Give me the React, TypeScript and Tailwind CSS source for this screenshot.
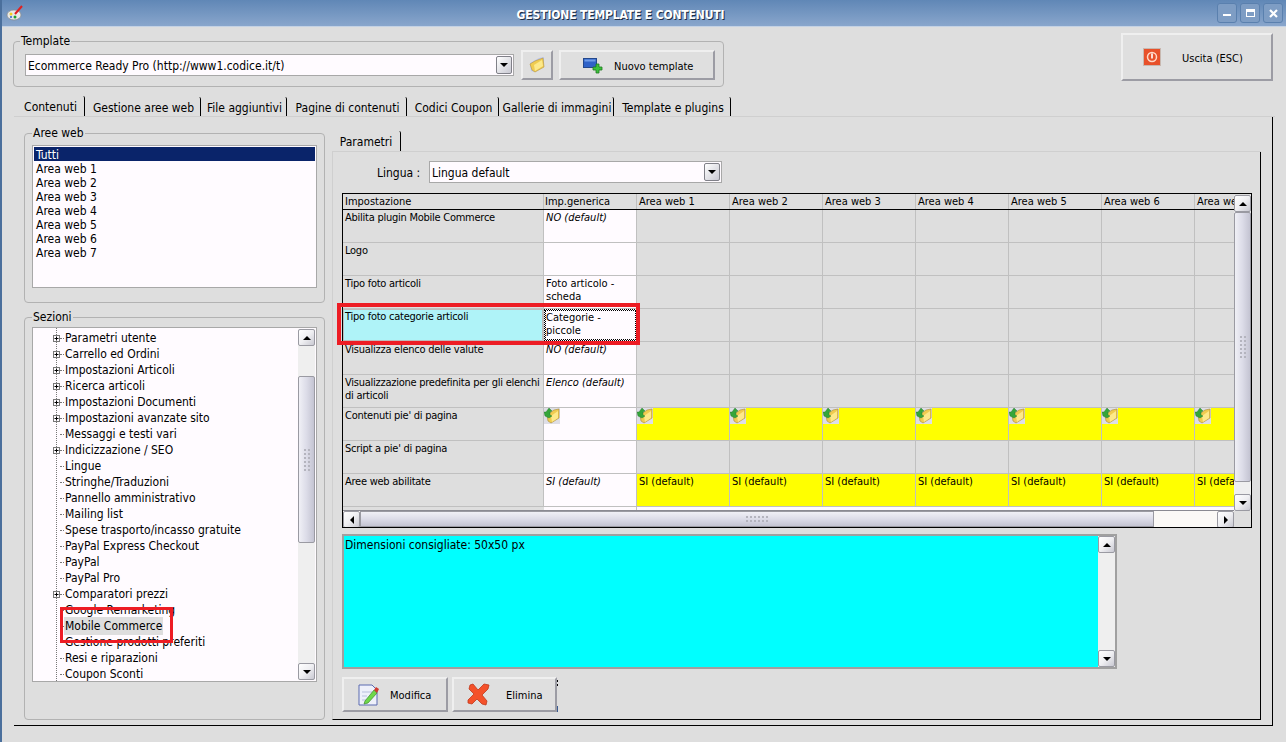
import React from "react";

const Tri = ({ d }: { d: "u" | "d" | "l" | "r" }) => {
  const p = { u: "1,7 9,7 5,3", d: "1,3 9,3 5,7", l: "7,1 7,9 3,5", r: "3,1 3,9 7,5" }[d];
  return (
    <svg width="10" height="10" viewBox="0 0 10 10">
      <polygon points={p} fill="#000" />
    </svg>
  );
};

const SBtn = ({ d }: { d: "u" | "d" | "l" | "r" }) => (
  <div className="w-[17px] h-[17px] shrink-0 flex items-center justify-center rounded-[2px] border border-[#9a9aa2] bg-gradient-to-br from-[#ffffff] via-[#efeff2] to-[#c9c9d2]">
    <Tri d={d} />
  </div>
);

const Grip = ({ cols, rows }: { cols: number; rows: number }) => (
  <div className="grid gap-[2px]" style={{ gridTemplateColumns: `repeat(${cols}, 2px)` }}>
    {Array.from({ length: cols * rows }).map((_, i) => (
      <div key={i} className="w-[2px] h-[2px] bg-[#b4b4be]" />
    ))}
  </div>
);

const VScroll = ({ before, thumb }: { before: number; thumb: number }) => (
  <div className="w-[17px] shrink-0 h-full flex flex-col bg-[#efefef]">
    <SBtn d="u" />
    <div className="shrink-0" style={{ height: before }} />
    {thumb > 0 && (
      <div
        className="shrink-0 flex items-center justify-center border border-[#9a9aa2] rounded-[2px] bg-gradient-to-r from-[#f0f0f6] via-[#dcdce8] to-[#c4c4d2]"
        style={{ height: thumb }}
      >
        <Grip cols={2} rows={6} />
      </div>
    )}
    <div className="flex-1" />
    <SBtn d="d" />
  </div>
);

const Group = ({ title, className, legend, children }: { title: string; className: string; legend: string; children: React.ReactNode }) => (
  <fieldset className={`border border-[#b2b2b2] rounded-[4px] ${className}`}>
    <legend className={`${legend} px-[1px] h-[14px] leading-[14px] whitespace-nowrap`}>{title}</legend>
    {children}
  </fieldset>
);

const Palette = () => (
  <svg width="18" height="16" viewBox="0 0 18 16">
    <ellipse cx="8" cy="10" rx="7" ry="5" fill="#e8e8e8" stroke="#8a8a8a" strokeWidth="0.7" />
    <circle cx="5" cy="9" r="1.5" fill="#f2d020" />
    <circle cx="9" cy="12" r="1.5" fill="#20a030" />
    <circle cx="5" cy="12" r="1" fill="#3060d0" />
    <path d="M9 9 L16 1" stroke="#e02020" strokeWidth="2" />
  </svg>
);

const Folder = () => (
  <svg width="16" height="16" viewBox="0 0 16 16">
    <path d="M1 6 L10 1 L15 0 L15 9 L6 15 L2 14 Z" fill="#b8c4ee" />
    <path d="M1 7 L6 4 L14 1 L15 10 L6 15 L3 13 Z" fill="#f0cc50" stroke="#b8963a" strokeWidth="0.6" />
    <path d="M5 8 L13 3 L14 9 L6 14 Z" fill="#fde98a" />
  </svg>
);

const FolderGreen = () => (
  <svg width="16" height="16" viewBox="0 0 16 16">
    <rect width="16" height="16" fill="#dedee6" />
    <path d="M3 7 L10 2 L15 1 L15 10 L7 15 L4 13 Z" fill="#f0cc50" stroke="#a88a38" strokeWidth="0.6" />
    <path d="M7 8 L14 3 L14 10 L8 14 Z" fill="#fde98a" />
    <path d="M5 0 L8 3 L6 4 L6 7 L8 8 L5 10 L1 8 L0 4 L2 4 Z" fill="#35a53a" stroke="#1d7426" strokeWidth="0.4" />
  </svg>
);

const NewTemplate = () => (
  <svg width="20" height="17" viewBox="0 0 20 17">
    <rect x="0.5" y="1.5" width="13" height="9" fill="#2f62c8" stroke="#24488c" />
    <rect x="1.5" y="2.5" width="11" height="2" fill="#6f9be8" />
    <path d="M11 8 h3 v-3 h3 v3 h3 v3 h-3 v3 h-3 v-3 h-3 z" transform="translate(-1 2)" fill="#3cc23c" stroke="#1e7a1e" strokeWidth="0.8" />
  </svg>
);

const Power = () => (
  <svg width="18" height="18" viewBox="0 0 18 18">
    <rect x="0.5" y="0.5" width="17" height="17" fill="#e8512a" stroke="#c8b8b0" />
    <circle cx="9" cy="9" r="4.5" fill="none" stroke="#ffd8c8" strokeWidth="1.5" />
    <rect x="8.2" y="5.5" width="1.6" height="5" fill="#fff" />
  </svg>
);

const EditIcon = () => (
  <svg width="22" height="22" viewBox="0 0 22 22">
    <path d="M1 1 H14 L19 6 V21 H1 Z" fill="#eef0fa" stroke="#5a6ab0" />
    <path d="M4 8 H14 M4 12 H9 M4 16 H8" stroke="#b8c0dc" />
    <path d="M7 17 L16 6 L19 9 L10 19 L6 20 Z" fill="#6fd84a" stroke="#3c8a2c" strokeWidth="0.7" />
    <path d="M16 6 L18 3 L21 5 L19 9 Z" fill="#d03a30" />
  </svg>
);

const XIcon = () => (
  <svg width="23" height="23" viewBox="0 0 23 23">
    <path
      d="M3 2 L6 1 L11 7 L17 1 L22 2 L21 6 L15 12 L20 18 L19 22 L15 21 L10 16 L5 21 L1 20 L1 17 L7 11 L2 6 Z"
      fill="#f4512a"
      stroke="#c0391c"
      strokeWidth="0.8"
    />
  </svg>
);

const Btn = ({ w, h, children, className = "" }: { w: string; h: string; children?: React.ReactNode; className?: string }) => (
  <div
    className={`${w} ${h} shrink-0 flex items-center bg-[#dfdfdf] border-2 border-t-[#efefef] border-l-[#efefef] border-r-[#9c9ca4] border-b-[#9c9ca4] ${className}`}
  >
    {children}
  </div>
);

const tabs = [
  ["Contenuti", "w-[70px]"],
  ["Gestione aree web", "w-[116px]"],
  ["File aggiuntivi", "w-[86px]"],
  ["Pagine di contenuti", "w-[120px]"],
  ["Codici Coupon", "w-[92px]"],
  ["Gallerie di immagini", "w-[115px]"],
  ["Template e plugins", "w-[117px]"],
];

const tree: [string, boolean][] = [
  ["Parametri utente", true],
  ["Carrello ed Ordini", true],
  ["Impostazioni Articoli", true],
  ["Ricerca articoli", true],
  ["Impostazioni Documenti", true],
  ["Impostazioni avanzate sito", true],
  ["Messaggi e testi vari", false],
  ["Indicizzazione / SEO", true],
  ["Lingue", false],
  ["Stringhe/Traduzioni", false],
  ["Pannello amministrativo", false],
  ["Mailing list", false],
  ["Spese trasporto/incasso gratuite", false],
  ["PayPal Express Checkout", false],
  ["PayPal", false],
  ["PayPal Pro", false],
  ["Comparatori prezzi", true],
  ["Google Remarketing", false],
  ["Mobile Commerce", false],
  ["Gestione prodotti preferiti", false],
  ["Resi e riparazioni", false],
  ["Coupon Sconti", false],
];

const Plus = () => (
  <svg width="7" height="7" viewBox="0 0 7 7" className="shrink-0">
    <rect x="0.5" y="0.5" width="6" height="6" fill="#fffbff" stroke="#777" />
    <path d="M1.5 3.5 H5.5 M3.5 1.5 V5.5" stroke="#000" />
  </svg>
);

type Cell = { t?: string; i?: boolean; y?: boolean; f?: boolean };
const rows: { name: string; gen?: Cell; others?: Cell; hl?: boolean }[] = [
  { name: "Abilita plugin Mobile Commerce", gen: { t: "NO (default)", i: true } },
  { name: "Logo" },
  { name: "Tipo foto articoli", gen: { t: "Foto articolo - scheda" } },
  { name: "Tipo foto categorie articoli", gen: { t: "Categorie - piccole" }, hl: true },
  { name: "Visualizza elenco delle valute", gen: { t: "NO (default)", i: true } },
  { name: "Visualizzazione predefinita per gli elenchi di articoli", gen: { t: "Elenco (default)", i: true } },
  { name: "Contenuti pie' di pagina", gen: { f: true }, others: { f: true, y: true } },
  { name: "Script a pie' di pagina" },
  { name: "Aree web abilitate", gen: { t: "SI (default)", i: true }, others: { t: "SI (default)", y: true } },
];

const areaCols = ["Area web 1", "Area web 2", "Area web 3", "Area web 4", "Area web 5", "Area web 6", "Area web 7"];

export default function App() {
  return (
    <div className="relative w-[1286px] h-[742px] overflow-hidden bg-[#dedede] text-black text-[12px] flex flex-col border-l-2 border-[#4a6f9c] font-['DejaVu_Sans_Condensed','DejaVu_Sans',sans-serif] [font-stretch:condensed]">
      {/* title bar */}
      <div className="h-[27px] shrink-0 -ml-[2px] pl-[6px] pr-[3px] flex items-center bg-gradient-to-b from-[#6087b6] to-[#89a6cc] border-b border-[#c4d2e4]">
        <Palette />
        <div className="flex-1 text-center text-white font-bold text-[12px] tracking-[-0.15px] pt-[3px] [text-shadow:1px_1px_0_#1c2c44]">
          GESTIONE TEMPLATE E CONTENUTI
        </div>
        <div className="flex gap-[3px]">
          {[0, 1, 2].map((k) => (
            <div key={k} className="w-[20px] h-[20px] rounded-[3px] border border-[#5a80ae] bg-[#7e9dc4] flex items-center justify-center">
              {k === 0 && <div className="w-[8px] h-[2px] mt-[3px] bg-white" />}
              {k === 1 && <div className="w-[9px] h-[8px] border border-t-[3px] border-white" />}
              {k === 2 && (
                <svg width="9" height="9" viewBox="0 0 9 9">
                  <path d="M1 1 L8 8 M8 1 L1 8" stroke="#fff" strokeWidth="2.2" />
                </svg>
              )}
            </div>
          ))}
        </div>
      </div>

      {/* top row */}
      <div className="h-[70px] shrink-0 flex items-start pl-[11px] pt-[7px]">
        <Group title="Template" legend="-ml-[5px]" className="w-[711px] h-[53px] pl-[11px] pt-[6px] shrink-0">
          <div className="flex items-start gap-[7px]">
            <div className="w-[489px] h-[22px] bg-[#fffbff] border border-[#a8a8a8] flex items-center pl-[2px] pr-[1px]">
              <div className="flex-1 text-[12px] whitespace-nowrap pt-[2px]">Ecommerce Ready Pro (http://www1.codice.it/t)</div>
              <div className="w-[16px] h-[18px] rounded-[2px] border border-[#808088] bg-gradient-to-br from-white to-[#c9c9d2] flex items-center justify-center">
                <Tri d="d" />
              </div>
            </div>
            <Btn w="w-[32px]" h="h-[30px] -mt-[4px]" className="justify-center">
              <Folder />
            </Btn>
            <Btn w="w-[156px] -ml-[1px]" h="h-[30px] -mt-[4px]" className="pl-[22px] gap-[11px]">
              <NewTemplate />
              <span className="text-[11px] whitespace-nowrap mt-[4px]">Nuovo template</span>
            </Btn>
          </div>
        </Group>
        <div className="flex-1" />
        <Btn w="w-[152px] mr-[13px] mt-[-1px]" h="h-[48px]" className="pl-[20px] gap-[21px]">
          <Power />
          <span className="text-[11px] whitespace-nowrap mt-[4px]">Uscita (ESC)</span>
        </Btn>
      </div>

      {/* tabs */}
      <div className="h-[20px] shrink-0 flex pl-[1px] ml-[12px] mr-[11px] border-b border-[#cfcfcf]">
        {tabs.map(([t, w], i) => (
          <div
            key={t}
            className={`${w} shrink-0 flex items-center justify-center whitespace-nowrap border-r border-black rounded-tr-[2px] pl-[2px] pt-[2px] ${
              i === 0 ? "h-[20px] -mt-[1px] bg-[#dedede]" : "h-[19px]"
            }`}
          >
            {t}
          </div>
        ))}
      </div>

      {/* tab page */}
      <div className="w-[1259px] h-[609px] shrink-0 ml-[12px] border-r border-b border-black flex pl-[10px] pt-[9px] gap-[7px]">
        {/* left column */}
        <div className="w-[301px] shrink-0 flex flex-col gap-[7px]">
          <Group title="Aree web" legend="ml-0" className="h-[177px] px-[7px] pt-[5px] shrink-0">
            <div className="h-[143px] bg-[#fffbff] border border-[#a8a8a8] p-[1px]">
              <div className="h-[14px] leading-[16px] pl-[2px] bg-[#0a246a] text-white overflow-hidden">Tutti</div>
              {[1, 2, 3, 4, 5, 6, 7].map((n) => (
                <div key={n} className="h-[14px] leading-[16px] pl-[2px]">
                  Area web {n}
                </div>
              ))}
            </div>
          </Group>
          <Group title="Sezioni" legend="ml-0" className="h-[410px] px-[7px] pt-[3px]">
            <div className="h-[355px] bg-[#fffbff] border border-[#a8a8a8] flex overflow-hidden">
              <div className="flex-1 relative pt-[2px]">
                <div className="absolute left-[23px] top-0 bottom-0 border-l border-dotted border-[#777]" />
                {tree.map(([t, plus]) => (
                  <div key={t} className="h-[16px] flex items-center relative pl-[20px]">
                    <div className="w-[7px] flex justify-center shrink-0 z-10">{plus && <Plus />}</div>
                    <div className="w-[4px] border-t border-dotted border-[#777] shrink-0" />
                    <span className={`px-[1px] whitespace-nowrap ${t === "Mobile Commerce" ? "bg-[#dedede]" : ""}`}>{t}</span>
                  </div>
                ))}
              </div>
              <div className="pt-[1px] pb-[1px] h-full shrink-0">
                <VScroll before={30} thumb={167} />
              </div>
              <div className="w-[1px]" />
            </div>
          </Group>
        </div>

        {/* right panel */}
        <div className="w-[929px] shrink-0 flex flex-col mt-[5px]">
          <div className="h-[21px] shrink-0 border-b border-[#cfcfcf]">
            <div className="w-[69px] h-[20px] flex items-center justify-center border-r border-black rounded-tr-[2px] pt-[2px]">Parametri</div>
          </div>
          <div className="h-[568px] shrink-0 border-l border-r border-b border-l-[#cfcfcf] border-r-black border-b-black pl-[9px] pr-[9px]">
            <div className="h-[41px] flex items-start pt-[9px]">
              <div className="w-[87px] pl-[35px] pt-[2px] h-[22px] flex items-center text-[12px]">Lingua :</div>
              <div className="w-[293px] h-[22px] bg-[#fffbff] border border-[#a8a8a8] flex items-center pl-[2px] pr-[1px]">
                <div className="flex-1 pt-[2px]">Lingua default</div>
                <div className="w-[16px] h-[18px] rounded-[2px] border border-[#808088] bg-gradient-to-br from-white to-[#c9c9d2] flex items-center justify-center">
                  <Tri d="d" />
                </div>
              </div>
            </div>

            {/* grid */}
            <div className="w-[910px] h-[335px] border border-black text-[11px] flex overflow-hidden">
              <div className="flex-1 flex flex-col min-w-0">
                <div className="flex-1 overflow-hidden">
                  <div className="flex h-[16px] border-b border-black">
                    <div className="w-[201px] pl-[2px] border-r border-[#c0c0c0] leading-[16px] shrink-0">Impostazione</div>
                    <div className="w-[93px] pl-[1px] border-r border-[#c0c0c0] leading-[16px] shrink-0">Imp.generica</div>
                    {areaCols.map((a) => (
                      <div key={a} className="w-[93px] pl-[2px] border-r border-[#c0c0c0] leading-[16px] shrink-0 whitespace-nowrap overflow-hidden">
                        {a}
                      </div>
                    ))}
                  </div>
                  {rows.map((r) => (
                    <div key={r.name} className="flex h-[33px] border-b border-[#c0c0c0]">
                      <div
                        className={`w-[201px] pl-[2px] pt-[1px] leading-[13px] tracking-[-0.25px] border-r border-[#c0c0c0] shrink-0 ${
                          r.hl ? "bg-[#aff3f8] shadow-[inset_0_0_0_1px_#bcbcbc]" : ""
                        }`}
                      >
                        {r.name}
                      </div>
                      {r.hl ? (
                        <div className="w-[93px] leading-[13px] bg-[#fffbff] border border-dotted border-black outline outline-dotted outline-1 -outline-offset-2 outline-black pl-[1px] pt-[1px] shrink-0">
                          {r.gen?.t}
                        </div>
                      ) : (
                        <div
                          className={`w-[93px] leading-[13px] bg-[#fffbff] border-r border-[#c0c0c0] shrink-0 ${r.gen?.i ? "italic" : ""} ${
                            r.gen?.f ? "" : "pl-[2px] pt-[1px]"
                          }`}
                        >
                          {r.gen?.f ? <FolderGreen /> : r.gen?.t}
                        </div>
                      )}
                      {areaCols.map((a) => (
                        <div
                          key={a}
                          className={`w-[93px] leading-[13px] border-r border-[#c0c0c0] shrink-0 whitespace-nowrap overflow-hidden ${r.others?.y ? "bg-[#ffff00]" : ""} ${
                            r.others?.f ? "" : "pl-[2px] pt-[1px]"
                          }`}
                        >
                          {r.others?.f ? <FolderGreen /> : r.others?.t}
                        </div>
                      ))}
                    </div>
                  ))}
                  <div className="flex h-[5px]">
                    <div className="w-[201px] shrink-0" />
                    <div className="w-[93px] shrink-0 bg-[#fffbff] border-r border-[#c0c0c0]" />
                    <div className="flex-1 bg-[#fffbff]" />
                  </div>
                </div>
                <div className="h-[17px] shrink-0 flex bg-[#fbf9f6] border-t border-[#8a8a92]">
                  <SBtn d="l" />
                  <div className="w-[794px] shrink-0 flex items-center justify-center border border-[#9a9aa2] bg-gradient-to-b from-[#f0f0f6] via-[#dcdce8] to-[#c4c4d2]">
                    <Grip cols={6} rows={2} />
                  </div>
                  <div className="flex-1" />
                  <SBtn d="r" />
                </div>
              </div>
              <div className="flex flex-col w-[17px] shrink-0 h-full">
                <div className="h-[317px] shrink-0 pt-[1px]">
                  <VScroll before={0} thumb={270} />
                </div>
                <div className="flex-1 bg-[#dedede]" />
              </div>
            </div>

            {/* info */}
            <div className="w-[775px] h-[135px] mt-[6px] bg-[#00ffff] border-2 border-[#a0a0a0] flex">
              <div className="flex-1 text-[12px] pl-[1px] leading-[16px] pt-[1px]">Dimensioni consigliate: 50x50 px</div>
              <div className="h-full shrink-0">
                <VScroll before={0} thumb={0} />
              </div>
            </div>

            {/* buttons */}
            <div className="flex gap-[4px] mt-[8px]">
              <Btn w="w-[106px]" h="h-[35px]" className="pl-[14px] gap-[10px]">
                <EditIcon />
                <span className="text-[11px] mt-[4px]">Modifica</span>
              </Btn>
              <Btn w="w-[105px]" h="h-[35px]" className="pl-[13px] gap-[16px]">
                <XIcon />
                <span className="text-[11px] mt-[4px]">Elimina</span>
              </Btn>
              <div className="w-[1px] h-[35px] -ml-[4px] flex flex-col">
                <div className="h-[2px] mt-[3px] bg-black" />
                <div className="h-[2px] mt-[2px] bg-black" />
                <div className="h-[6px] mt-[20px] bg-[#3a5a90]" />
              </div>
            </div>
          </div>
        </div>
      </div>

      {/* red annotations */}
      <div className="absolute left-[335px] top-[303px] w-[303px] h-[42px] border-[4px] border-[#ed1c24] pointer-events-none" />
      <div className="absolute left-[58px] top-[607px] w-[113px] h-[36px] border-[3px] border-[#ed1c24] pointer-events-none" />
    </div>
  );
}
